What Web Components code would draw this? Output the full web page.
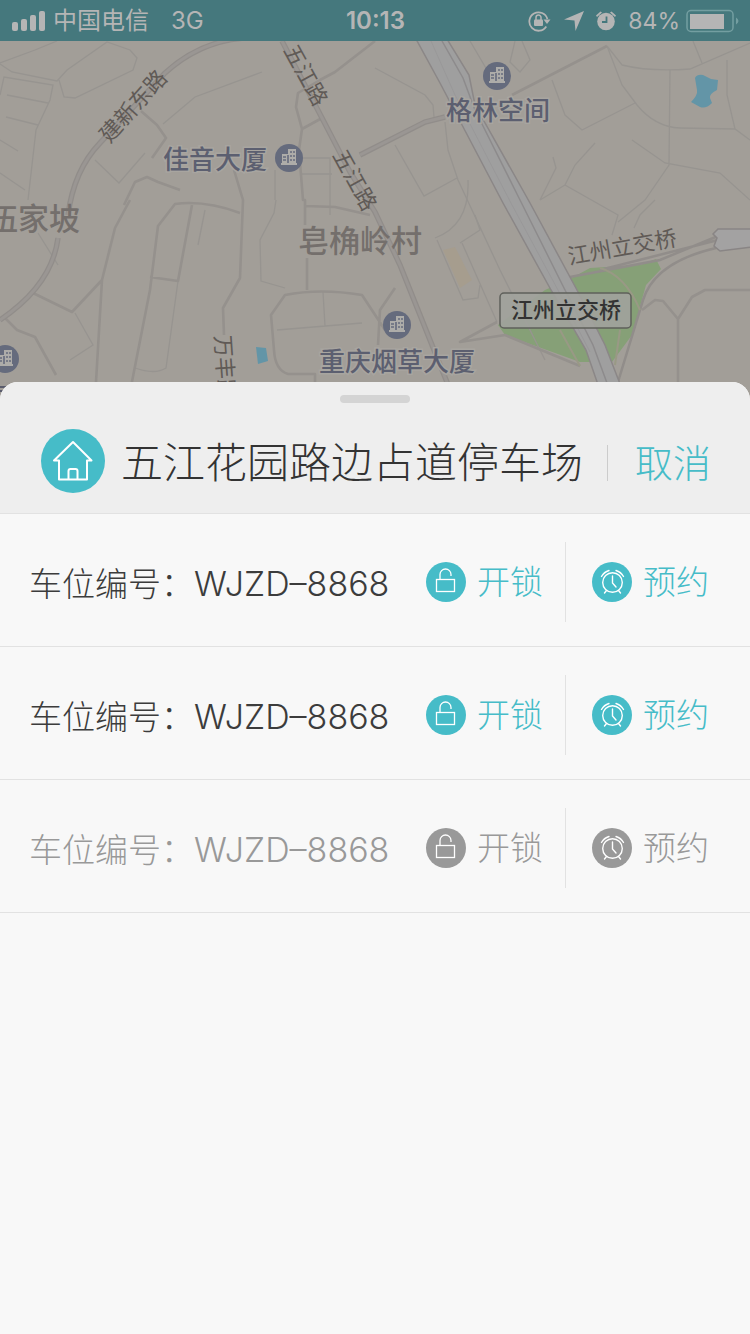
<!DOCTYPE html>
<html lang="zh-CN">
<head>
<meta charset="utf-8">
<meta name="viewport" content="width=device-width, initial-scale=1">
<title>停车场</title>
<style>
  :root { --teal: #46bcc8; --ink: #333; --muted: #999; --line: #e2e2e2; }
  body { margin: 0; background: #f8f8f8; font-family: Inter, "Noto Sans CJK SC", sans-serif; color: var(--ink); }
</style>
</head>
<body>
<parking-app></parking-app>

<script>
const define = (name, html) => {
  const template = document.createElement('template');
  template.innerHTML = html;
  customElements.define(name, class extends HTMLElement {
    constructor() {
      super();
      this.attachShadow({ mode: 'open' }).append(template.content.cloneNode(true));
    }
  });
};

define('status-bar', `
<style>
  :host { display: grid; grid-template-columns: 1fr auto 1fr; align-items: center; height: 41px; padding: 0 11px 0 12px;
          background: #45787d; color: #b5b5b5; font-size: 24px; line-height: 40px; box-sizing: border-box; }
  .side { display: flex; align-items: center; }
  .left { gap: 8px; }
  .net { margin-left: 14px; }
  .percent { font-size: 23px; }
  .right { justify-content: flex-end; }
  .right svg { margin-right: 12px; }
  .right svg.bat { margin: 0 0 0 6px; }
  b { font-weight: 600; }
  svg { display: block; flex: none; }
</style>
<div class="side left">
  <svg width="33" height="20" fill="#b5b5b5" aria-label="信号"><rect y="11" width="6" height="9" rx="2"/><rect x="9" y="8" width="6" height="12" rx="2"/><rect x="18" y="4" width="6" height="16" rx="2"/><rect x="27" width="6" height="20" rx="2"/></svg>
  <span>中国电信</span><span class="net">3G</span>
</div>
<b>10:13</b>
<div class="side right">
  <svg width="24" height="22" viewBox="0 0 24 22" fill="none" stroke="#b5b5b5" stroke-width="1.8"><path d="M18.3 16.5A9.2 9.2 0 1 1 19.4 9"/><path d="M15.5 9.5h7l-3.5 4.5z" fill="#b5b5b5" stroke="none"/><rect x="6" y="9.500" width="9" height="6.500" rx="1" fill="#b5b5b5" stroke="none"/><path d="M8 10V7.500a2.500 2.500 0 0 1 5 0V10" stroke-width="1.500"/></svg>
  <svg width="20" height="20" viewBox="0 0 20 20" fill="#b5b5b5"><path d="M20 0 11.500 20 10.500 9.500 0 8.500z"/></svg>
  <svg width="20" height="20" viewBox="0 0 20 20" fill="#b5b5b5"><circle cx="10" cy="10.500" r="8.800"/><path d="M0 4.500 4.500.5 6 1.500 1 6zM20 4.500 15.500.5 14 1.500 19 6z"/><path d="M10.500 5.500V11H6" fill="none" stroke="#45787d" stroke-width="1.800"/></svg>
  <span class="percent">84%</span>
  <svg class="bat" width="53" height="24" viewBox="0 0 53 24"><rect x="1" y="1.500" width="46" height="21" rx="4" fill="none" stroke="#739ea1" stroke-width="1.500"/><rect x="4" y="5" width="34" height="15" fill="#b5b5b5"/><path d="M50 8.500q5 3.500 0 7z" fill="#739ea1"/></svg>
</div>`);

define('city-map', `
<style>
  :host { display: block; height: 361px; background: #a29e98; overflow: hidden; }
  svg { display: block; width: 100%; height: 100%; }
  .thin { fill: none; stroke: #979490; stroke-width: 1.300; }
  .mid { fill: none; stroke: #95918d; stroke-width: 2.600; stroke-linejoin: round; }
  .road { fill: none; stroke: #918d8a; stroke-width: 5.500; }
  .core { fill: none; stroke: #9a9693; stroke-width: 3; }
  .street { font-size: 22px; fill: #605a56; text-anchor: middle; dominant-baseline: central; }
  .poi { font-size: 26px; font-weight: 500; fill: #5c5f70; stroke: #a8a5a0; stroke-width: 3; paint-order: stroke; }
  .area { font-size: 31px; font-weight: 500; fill: #746f6c; }
</style>
<svg viewBox="0 41 750 361" preserveAspectRatio="xMidYMin slice">
  <defs>
    <g id="pin"><circle r="14" fill="#656b7d"/><path fill="#adaca9" d="M-8 5h1v-9h6v-5h8v14h1v2H-8z"/><path stroke="#656b7d" stroke-width="1.600" d="M1-6h2M4-6h2M1-2h2M4-2h2M1 2h2M4 2h2M-6-1h3M-6 2h3M-1-3v8"/></g>
  </defs>
  <path fill="#86a077" d="M568 280 590 268 640 265 656 259 661 269 646 285 632 335 612 362 580 362 505 335 498 325 545 290z"/>
  <path fill="#a69d8e" d="M443 250 455 247 472 280 460 288z"/>
  <path class="thin" d="M0 63 35 50 57 41M0 64 12 72 57 81 67 70 107 42 130 50 137 58 133 70 75 98 64 97 59 80M0 95 4 77 53 85 50 100 36 130 28 200M7 95 48 103M6 117 38 125M0 140 18 151M0 173 25 190M163 124 195 97 262 72M95 160 119 183 145 153M277 158H330V215M275 170V200M302 174H332"/>
  <path class="thin" d="M375 68 425 95 433 105 434 117M395 145 424 196 457 178M445 122 448 150 458 180 500 270 545 360M607 46 622 65Q650 72 690 69L750 43M607 46 622 85 637 105Q655 127 680 128L735 129 750 140M670 70 669 165 645 200 618 222M735 129 727 95V60M632 140 665 163 720 173 750 200M552 80 565 115 582 130 635 103M595 143 575 165 565 185 618 215 612 235M565 185 540 200M470 41 490 75M522 41 530 60 520 72 510 62 515 41M693 41 702 63M553 157 556 168 540 200M655 200 640 215 634 228"/>
  <path class="thin" d="M178 281 166 368Q155 375 135 368M75 313 93 345 70 360M276 200 274 213 260 240 261 281 285 288M323 292 325 326M277 330 362 323M205 210 198 245M38 233 58 265M437 240 463 300 478 298 480 285M460 243 480 230 475 215M462 243 497 322M468 180Q470 225 435 238"/>
  <path class="mid" d="M141 111 157 125 166 138 152 158M375 41 335 72 320 80 298 93 296 107 302 129 322 118M302 129 299 150 303 200 305 200V225M307 258V290M130 200 115 228 102 280 96 382M124 205 135 182 147 177 158 182 180 190M128 402 150 290 158 226 175 204Q205 200 240 213M234 170 243 200 240 278 223 308 224 335M192 205 178 281 150 277M33 293 72 312 102 280M5 318 17 330 35 337 56 375M305 206 335 207 370 215M315 402V374H288Q275 370 274 350L271 315 285 295Q320 288 362 295L385 330M512 95 607 46M395 288 380 310 378 345M497 322 460 342 505 335 580 366M642 310 655 300 663 301 678 319V402M678 319 692 297 705 290H750"/>
  <path class="road" d="M68 215Q74 170 100 143L165 73Q200 41 245 38M58 238Q52 285 0 320M282 41 322 118 350 172 375 212 400 265 430 340 455 402M360 155 425 122 445 117"/>
  <path class="core" d="M68 215Q74 170 100 143L165 73Q200 41 245 38M58 238Q52 285 0 320M282 41 322 118 350 172 375 212 400 265 430 340 455 402M360 155 425 122 445 117"/>
  <path class="road" style="stroke-width:2.500" d="M718 236 660 260 570 277M716 248Q655 262 643 300L618 382M718 240 600 270"/>
  <path fill="none" stroke="#999985" stroke-width="2" d="M600 268Q625 275 640 310M560 330 580 366M620 330 615 365"/>
  <path fill="#9f9f9f" stroke="#8b8787" stroke-width="1.500" d="M416 39 440 83 503 203 551 290 586 350 604 402H627L605 345 577 290 530 203 475 105 469 75 447 39z"/>
  <path fill="none" stroke="#8d8b8c" stroke-width="1.500" d="M442 41 463 78 475 110 521 202 565 290 593 345 614 402"/>
  <path fill="none" stroke="#999899" d="M431 41 455 95 512 205 558 290 590 352"/>
  <path fill="#a3a2a2" stroke="#898585" stroke-width="1.500" d="M752 229H718L713 234 717 238 714 246 720 251 752 247z"/>
  <path fill="#6395a7" d="M695 78Q697 74 703 75L711 79 718 80 717 90Q709 94 710 98L712 103Q706 109 700 107L691 102Q698 95 697 90z"/>
  <path fill="#6395a7" d="M256 347 266 348 268 361 258 364z"/>
  <path stroke="#5a5c6c" stroke-width="2" d="M0 387h8M0 391h5"/>
  <text class="street" transform="translate(133 106) rotate(-48)">建新东路</text>
  <text class="street" transform="translate(306 75) rotate(61)">五江路</text>
  <text class="street" transform="translate(355 180) rotate(61)">五江路</text>
  <text class="street" transform="translate(225 368) rotate(86)">万丰路</text>
  <text class="street" transform="translate(622 247) rotate(-10)">江州立交桥</text>
  <text class="poi" x="163" y="169">佳音大厦</text>
  <text class="poi" x="446" y="120">格林空间</text>
  <text class="poi" x="319" y="371">重庆烟草大厦</text>
  <text class="area" x="-13" y="230">伍家坡</text>
  <text class="area" x="298" y="252">皂桷岭村</text>
  <use href="#pin" x="497" y="76"/><use href="#pin" x="289" y="158"/><use href="#pin" x="397" y="325"/><use href="#pin" x="5" y="359"/>
  <rect x="500" y="293" width="131" height="35" rx="4" fill="#a1a29c" fill-opacity="0.900" stroke="#5f605b" stroke-width="1.500"/>
  <text x="566" y="318" font-size="22" font-weight="500" fill="#333" text-anchor="middle">江州立交桥</text>
</svg>`);

define('round-icon', `
<style>
  :host { display: flex; flex: none; width: 40px; height: 40px; border-radius: 50%; background: currentColor; }
  ::slotted(svg) { display: block; width: 100%; height: 100%; fill: none; stroke: #fff; }
</style>
<slot></slot>`);

define('sheet-header', `
<style>
  :host { display: block; background: #eee; border-bottom: 1px solid var(--line); border-radius: 18px 18px 0 0; }
  .grip { width: 70px; height: 8px; margin: 0 auto; border-radius: 4px; background: #d4d4d4; }
  .wrap { padding-top: 13px; }
  .bar { display: flex; align-items: center; height: 110px; padding: 6px 39px 0 41px; box-sizing: border-box; }
  round-icon { width: 64px; height: 64px; color: var(--teal); }
  h1 { flex: 1; margin: 4px 0 0 16px; font-size: 42px; line-height: 56px; font-weight: 300; white-space: nowrap; }
  i { width: 1px; height: 36px; margin: 4px 27px 0 0; background: #ccc; }
  button { margin: 4px 0 0; padding: 0; border: 0; background: none; color: var(--teal); font: inherit; font-size: 38px; line-height: 56px; font-weight: 300; }
</style>
<div class="wrap"><div class="grip"></div>
<div class="bar">
  <round-icon><svg viewBox="0 0 64 64" stroke-width="2" stroke-linejoin="round" stroke-linecap="round"><path d="M18 31.500h-5L32 13l18.500 18.500H46v19H18zM27.500 50.500V42q0-2 2-2h5q2 0 2 2v8.500"/></svg></round-icon>
  <h1><slot></slot></h1><i></i><button type="button">取消</button>
</div></div>`);

define('spot-row', `
<style>
  :host { display: flex; align-items: center; height: 133px; padding: 4px 41px 0 29px; box-sizing: border-box; color: #3c3c3c;
          border-bottom: 1px solid var(--line); font-size: 33px; line-height: 48px; font-weight: 300; --action: var(--teal); }
  :host([taken]) { color: var(--muted); --action: var(--muted); }
  .label { flex: 1; display: flex; align-items: baseline; white-space: nowrap; padding-top: 4px; }
  .code { font-size: 34px; }
  button { display: flex; align-items: center; gap: 11px; margin: 0; padding: 0; border: 0; background: none; color: var(--action); font: inherit; }
  i { width: 1px; height: 80px; margin: 0 26px 0 22px; background: var(--line); }
</style>
<div class="label"><span>车位编号：</span><span class="code"><slot></slot></span></div>
<button type="button"><round-icon><svg viewBox="0 0 40 40" stroke-width="1.300"><rect x="10.500" y="17.500" width="18" height="12"/><path d="M14 17.500V12.500a5.500 5.500 0 0 1 11 0v1.500"/></svg></round-icon>开锁</button>
<i></i>
<button type="button"><round-icon><svg viewBox="0 0 40 40" stroke-width="1.400" stroke-linecap="round"><circle cx="20.500" cy="20.500" r="9.800"/><path d="M20.500 14v7l3.500 4M14.500 28.500 12.500 31M26.500 28.500 28.500 31M9.500 14.500Q12 10 17 8.500M31.500 14.500Q29 10 24 8.500"/></svg></round-icon>预约</button>`);

define('parking-app', `
<style>
  :host { display: flex; flex-direction: column; min-height: 100vh; }
  section { position: relative; margin-top: -20px; flex: 1; background: #f8f8f8; border-radius: 18px 18px 0 0; }
</style>
<status-bar></status-bar>
<city-map></city-map>
<section>
  <sheet-header>五江花园路边占道停车场</sheet-header>
  <spot-row>WJZD–8868</spot-row>
  <spot-row>WJZD–8868</spot-row>
  <spot-row taken>WJZD–8868</spot-row>
</section>`);

document.querySelector('parking-app').shadowRoot.querySelectorAll('spot-row[taken]').forEach(row =>
  row.shadowRoot.querySelectorAll('button').forEach(button => { button.disabled = true; }));
</script>
</body>
</html>
